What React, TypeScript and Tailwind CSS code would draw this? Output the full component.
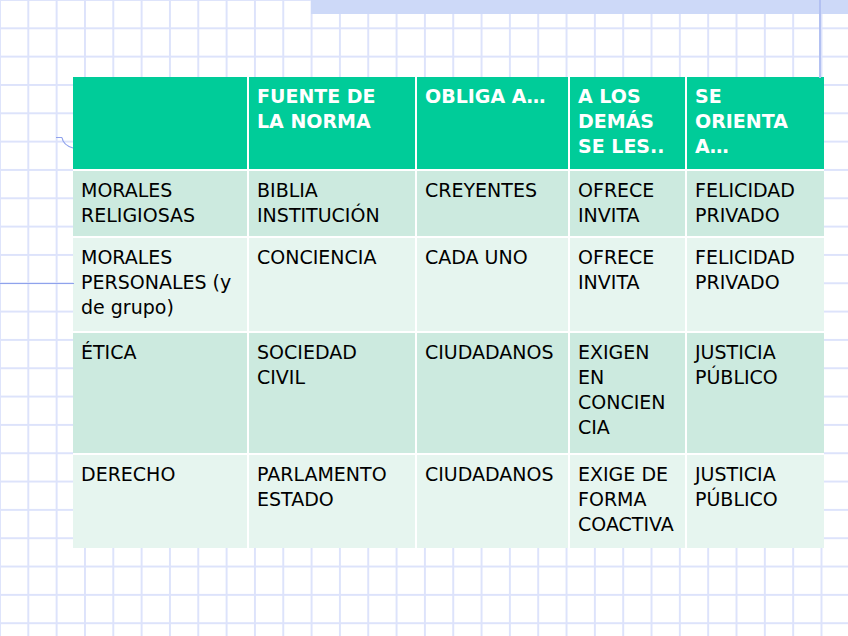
import React from 'react';

type Row = { cells: string[][] };

const header: string[][] = [
  [],
  ['FUENTE DE', 'LA NORMA'],
  ['OBLIGA A…'],
  ['A LOS', 'DEMÁS', 'SE LES..'],
  ['SE', 'ORIENTA', 'A…'],
];

const rows: Row[] = [
  { cells: [['MORALES', 'RELIGIOSAS'], ['BIBLIA', 'INSTITUCIÓN'], ['CREYENTES'], ['OFRECE', 'INVITA'], ['FELICIDAD', 'PRIVADO']] },
  { cells: [['MORALES', 'PERSONALES (y', 'de grupo)'], ['CONCIENCIA'], ['CADA UNO'], ['OFRECE', 'INVITA'], ['FELICIDAD', 'PRIVADO']] },
  { cells: [['ÉTICA'], ['SOCIEDAD', 'CIVIL'], ['CIUDADANOS'], ['EXIGEN', 'EN', 'CONCIEN', 'CIA'], ['JUSTICIA', 'PÚBLICO']] },
  { cells: [['DERECHO'], ['PARLAMENTO', 'ESTADO'], ['CIUDADANOS'], ['EXIGE DE', 'FORMA', 'COACTIVA'], ['JUSTICIA', 'PÚBLICO']] },
];

const Cell: React.FC<{ lines: string[]; className: string }> = ({ lines, className }) => (
  <div className={`px-[8px] pt-[7px] leading-[25px] ${className}`}>
    {lines.map((l, i) => (
      <div key={i} className="whitespace-nowrap">{l}</div>
    ))}
  </div>
);

export default function App() {
  return (
    <div className="relative w-[848px] h-[636px] overflow-hidden bg-white bg-[linear-gradient(to_right,#dde3fb_2px,transparent_2px),linear-gradient(to_bottom,#dde3fb_2px,transparent_2px)] bg-[size:28.33px_28.33px] bg-[position:-1px_-1px] font-['DejaVu_Sans',sans-serif]">
      {/* slide decorations */}
      <div className="absolute left-[311px] top-0 w-[537px] h-[14px] bg-[#cdd9f8]" />
      <div className="absolute left-[819px] top-0 w-[2px] h-[78px] bg-[#b3c1f2]" />
      <div className="absolute left-0 top-[283px] w-[74px] h-[1px] bg-[#8fa2ec]" />
      <svg className="absolute left-[56px] top-[136px]" width="18" height="14" viewBox="0 0 18 14">
        <path d="M0 1.5 H6 M6 1.5 Q7 9 17 12" fill="none" stroke="#8fa2ec" strokeWidth="1.2" />
      </svg>

      <div className="pt-[77px] pl-[73px]">
        <div className="grid grid-cols-[174px_166px_151px_115px_137px] grid-rows-[92px_65px_93px_120px_93px] gap-[2px] w-[751px] bg-white">
          {header.map((c, i) => (
            <Cell key={i} lines={c} className="bg-[#00cc99] text-white font-bold text-[19px]" />
          ))}
          {rows.map((r, ri) =>
            r.cells.map((c, ci) => (
              <Cell
                key={`${ri}-${ci}`}
                lines={c}
                className={`${ri % 2 === 0 ? 'bg-[#cceadf]' : 'bg-[#e6f5ef]'} text-black text-[19px]`}
              />
            )),
          )}
        </div>
      </div>
    </div>
  );
}
